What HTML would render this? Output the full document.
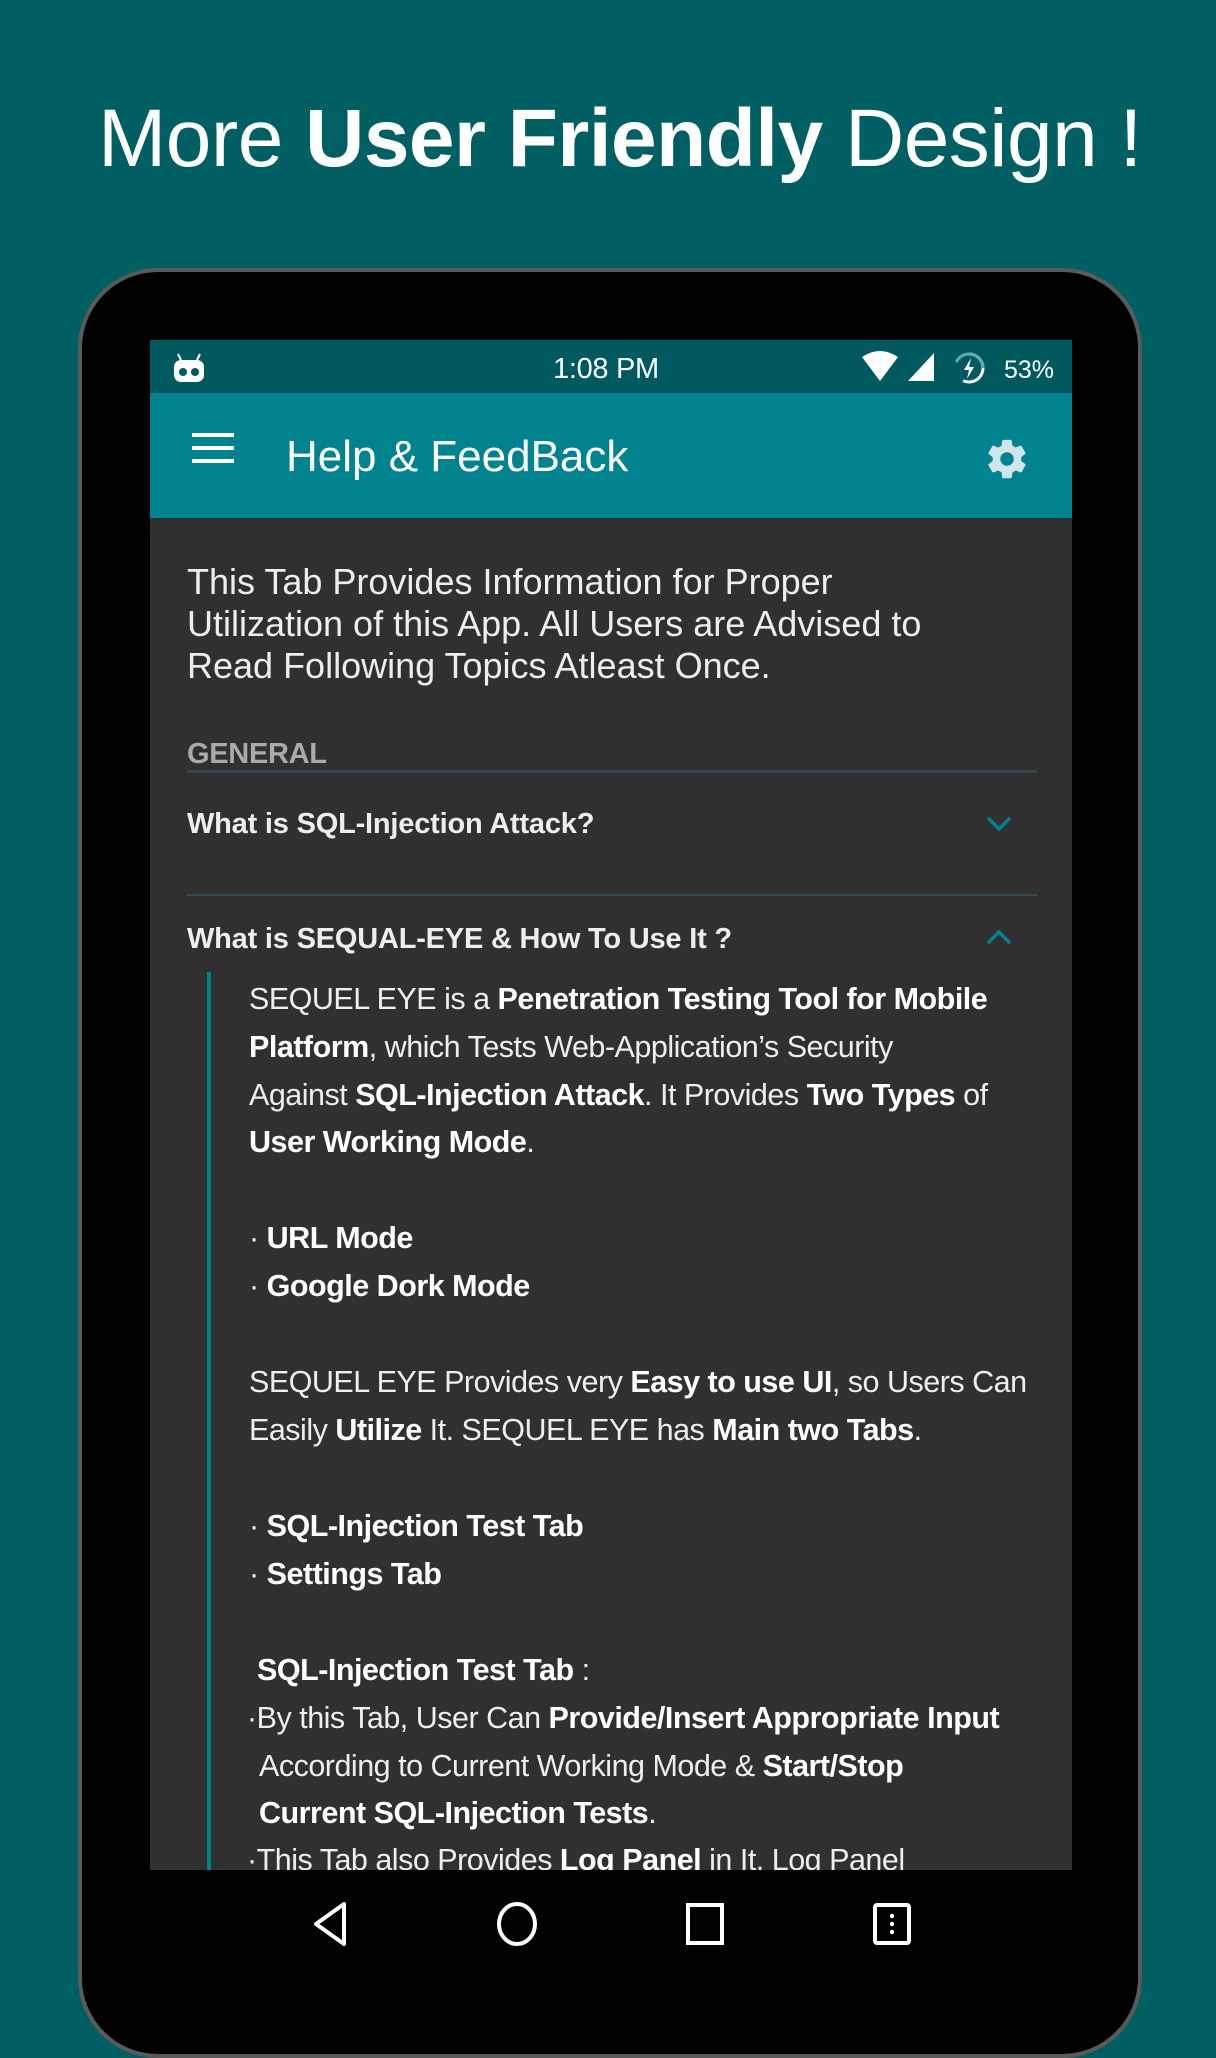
<!DOCTYPE html>
<html><head><meta charset="utf-8"><style>
*{margin:0;padding:0;box-sizing:border-box}
body{width:1216px;height:2048px;background:#005f63;position:relative;overflow:hidden;font-family:"Liberation Sans",sans-serif;color:#fff}
.t{position:absolute;white-space:nowrap}
#title{left:98px;top:92px;font-size:82px;letter-spacing:-0.5px}
#dev{position:absolute;left:78px;top:268px;width:1064px;height:1790px;background:#000;border:4px solid #5a5a5a;border-radius:80px}
#scr{position:absolute;left:150px;top:340px;width:922px;height:1530px;background:#303030;overflow:hidden}
#sb{position:absolute;left:0;top:0;width:922px;height:53px;background:#00595e}
#ab{position:absolute;left:0;top:53px;width:922px;height:125px;background:#00838f}
.s{position:absolute;white-space:nowrap;font-size:30.5px;letter-spacing:-0.5px;color:#eee}
b{font-weight:bold;color:#fff}
.q{font-size:29px;font-weight:bold;letter-spacing:-0.2px}
</style></head><body>
<div id="title" class="t">More <b>User Friendly</b> Design !</div>
<div id="dev"></div>
<div id="scr">
 <div id="sb">
  <svg style="position:absolute;left:22px;top:12px" width="34" height="32" viewBox="0 0 34 32"><path d="M6 2l3 6M28 2l-3 6" stroke="#fff" stroke-width="2"/><rect x="2" y="8" width="30" height="22" rx="7" fill="#fff"/><circle cx="11" cy="20" r="4" fill="#00595e"/><circle cx="23" cy="20" r="4" fill="#00595e"/></svg>
  <div class="t" style="left:403px;top:13px;font-size:29px;letter-spacing:-0.3px">1:08 PM</div>
  <svg style="position:absolute;left:710px;top:11px" width="40" height="32" viewBox="0 0 40 32"><path d="M2 6Q20 -6 38 6L20 30Z" fill="#fff"/></svg>
  <svg style="position:absolute;left:756px;top:11px" width="30" height="32" viewBox="0 0 30 32"><path d="M28 2V30H2Z" fill="#fff"/></svg>
  <svg style="position:absolute;left:802px;top:11px" width="34" height="34" viewBox="0 0 34 34"><circle cx="17" cy="17" r="14" fill="none" stroke="#fff" stroke-width="3" stroke-dasharray="50 100" transform="rotate(-90 17 17)"/><circle cx="17" cy="17" r="14" fill="none" stroke="#6aa" stroke-width="3" stroke-dasharray="0 50 100"/><path d="M19 7l-7 12h5l-2 9 7-12h-5z" fill="#fff"/></svg>
  <div class="t" style="left:854px;top:16px;font-size:25px">53%</div>
 </div>
 <div id="ab">
  <div style="position:absolute;left:42px;top:40px;width:42px;height:4px;background:#fff;box-shadow:0 13px 0 #fff,0 26px 0 #fff"></div>
  <div class="t" style="left:136px;top:39px;font-size:44px;letter-spacing:0">Help &amp; FeedBack</div>
  <svg style="position:absolute;left:834px;top:43px" width="46" height="46" viewBox="0 0 24 24"><path fill="#cfe6ea" d="M19.4 13c.04-.3.06-.65.06-1s-.02-.7-.06-1l2.1-1.650c.2-.15.24-.42.12-.64l-2-3.460c-.12-.22-.39-.3-.61-.22l-2.49 1c-.52-.4-1.080-.73-1.690-.98l-.38-2.650A.49.49 0 0 0 14 2h-4c-.25 0-.46.18-.49.42l-.38 2.650c-.61.25-1.170.59-1.690.98l-2.490-1c-.23-.09-.49 0-.61.22l-2 3.460c-.13.22-.07.49.12.64L4.560 11c-.04.32-.07.66-.07 1s.03.68.07 1l-2.100 1.650c-.2.15-.25.42-.12.64l2 3.460c.12.22.39.3.61.22l2.490-1c.52.4 1.080.73 1.690.98l.38 2.650c.03.24.24.42.49.42h4c.25 0 .46-.18.49-.42l.38-2.650c.61-.25 1.170-.59 1.690-.98l2.490 1c.23.09.49 0 .61-.22l2-3.460c.12-.22.07-.49-.12-.64zM12 15.5a3.5 3.5 0 1 1 0-7 3.5 3.5 0 0 1 0 7z"/></svg>
 </div>
 <div class="s" style="left:37px;top:221px;font-size:36px;letter-spacing:0">This Tab Provides Information for Proper</div>
 <div class="s" style="left:37px;top:263px;font-size:36px;letter-spacing:0">Utilization of this App. All Users are Advised to</div>
 <div class="s" style="left:37px;top:305px;font-size:36px;letter-spacing:0">Read Following Topics Atleast Once.</div>
 <div class="s" style="left:37px;top:398px;font-size:29px;font-weight:bold;color:#aaa;letter-spacing:-0.3px">GENERAL</div>
 <div style="position:absolute;left:37px;top:430px;width:850px;height:3px;background:#37474f"></div>
 <div class="s q" style="left:37px;top:468px">What is SQL-Injection Attack?</div>
 <svg style="position:absolute;left:835px;top:474px" width="28" height="20" viewBox="0 0 28 20"><path d="M3 4l11 11L25 4" fill="none" stroke="#00838f" stroke-width="3.5"/></svg>
 <div style="position:absolute;left:37px;top:554px;width:850px;height:2px;background:#37474f"></div>
 <div class="s q" style="left:37px;top:583px">What is SEQUAL-EYE &amp; How To Use It ?</div>
 <svg style="position:absolute;left:835px;top:587px" width="28" height="20" viewBox="0 0 28 20"><path d="M3 16L14 5l11 11" fill="none" stroke="#00838f" stroke-width="3.5"/></svg>
 <div style="position:absolute;left:57px;top:632px;width:4px;height:900px;background:#00838f"></div>
 <div class="s" style="left:99px;top:642px">SEQUEL EYE is a <b>Penetration Testing Tool for Mobile</b></div>
 <div class="s" style="left:99px;top:690px"><b>Platform</b>, which Tests Web-Application’s Security</div>
 <div class="s" style="left:99px;top:738px">Against <b>SQL-Injection Attack</b>. It Provides <b>Two Types</b> of</div>
 <div class="s" style="left:99px;top:785px"><b>User Working Mode</b>.</div>
 <div class="s" style="left:99px;top:881px">· <b>URL Mode</b></div>
 <div class="s" style="left:99px;top:929px">· <b>Google Dork Mode</b></div>
 <div class="s" style="left:99px;top:1025px">SEQUEL EYE Provides very <b>Easy to use UI</b>, so Users Can</div>
 <div class="s" style="left:99px;top:1073px">Easily <b>Utilize</b> It. SEQUEL EYE has <b>Main two Tabs</b>.</div>
 <div class="s" style="left:99px;top:1169px">· <b>SQL-Injection Test Tab</b></div>
 <div class="s" style="left:99px;top:1217px">· <b>Settings Tab</b></div>
 <div class="s" style="left:107px;top:1313px"><b>SQL-Injection Test Tab</b> :</div>
 <div class="s" style="left:97px;top:1361px">·By this Tab, User Can <b>Provide/Insert Appropriate Input</b></div>
 <div class="s" style="left:109px;top:1409px">According to Current Working Mode &amp; <b>Start/Stop</b></div>
 <div class="s" style="left:109px;top:1456px"><b>Current SQL-Injection Tests</b>.</div>
 <div class="s" style="left:97px;top:1503px">·This Tab also Provides <b>Log Panel</b> in It. Log Panel</div>
</div>
<svg style="position:absolute;left:310px;top:1900px" width="40" height="48" viewBox="0 0 40 48"><path d="M34 4L6 24l28 20z" fill="none" stroke="#fff" stroke-width="4" stroke-linejoin="round"/></svg>
<svg style="position:absolute;left:495px;top:1900px" width="44" height="48" viewBox="0 0 44 48"><ellipse cx="22" cy="24" rx="18" ry="20" fill="none" stroke="#fff" stroke-width="4"/></svg>
<svg style="position:absolute;left:685px;top:1902px" width="40" height="44" viewBox="0 0 40 44"><rect x="3" y="3" width="34" height="38" fill="none" stroke="#fff" stroke-width="4"/></svg>
<svg style="position:absolute;left:872px;top:1902px" width="40" height="44" viewBox="0 0 40 44"><rect x="3" y="3" width="34" height="38" rx="2" fill="none" stroke="#fff" stroke-width="4"/><circle cx="20" cy="14" r="2.2" fill="#fff"/><circle cx="20" cy="22" r="2.2" fill="#fff"/><circle cx="20" cy="30" r="2.2" fill="#fff"/></svg>
</body></html>
